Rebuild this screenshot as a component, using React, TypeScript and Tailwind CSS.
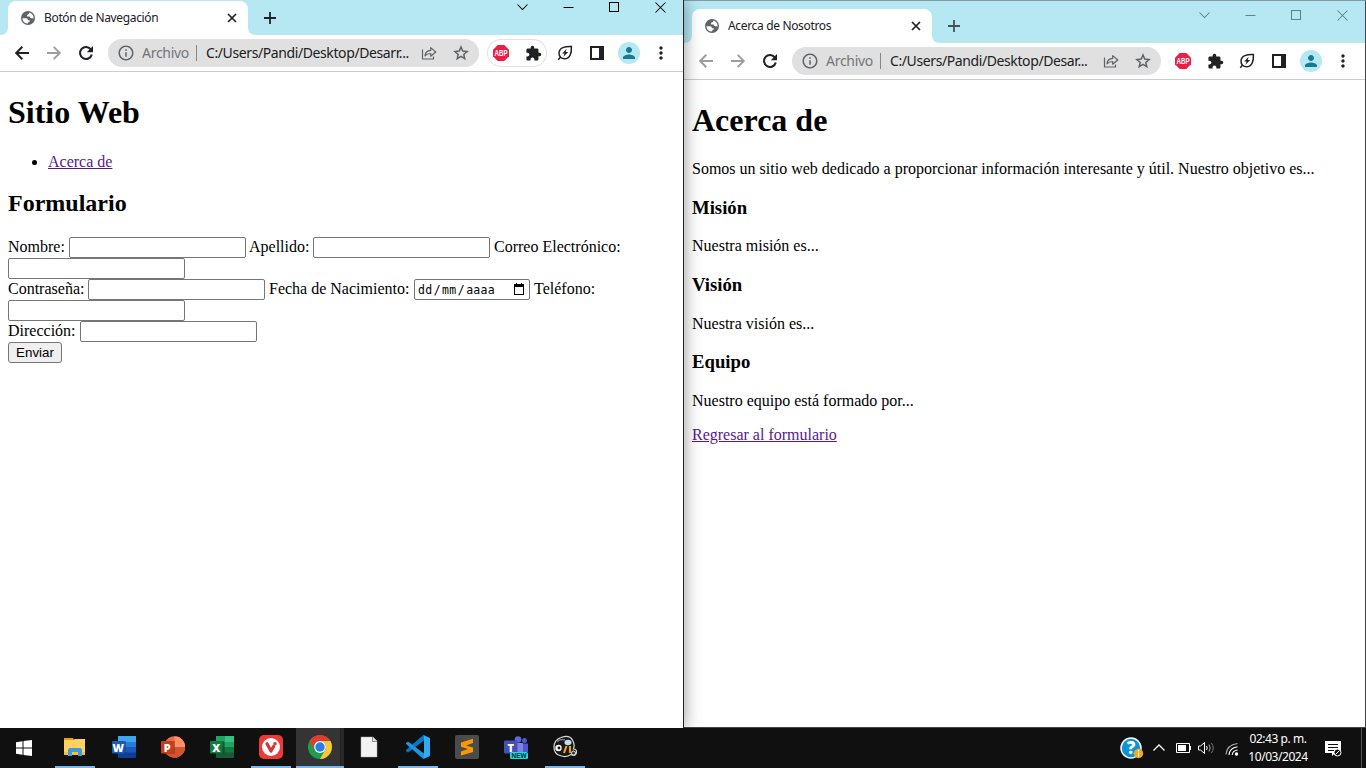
import React from "react";
import { MdInfoOutline, MdExtension, MdPerson, MdMoreVert } from "react-icons/md";

function GlobeIcon() {
  return (
    <svg width="14" height="14" viewBox="0 0 14 14" className="shrink-0">
      <circle cx="7" cy="7" r="7" fill="#5f6368" />
      <path d="M1.3 7.2 H5 Q7 7.4 7 9.2 H8.8 V10.6 Q7 10.8 7 12.6 Q2.2 12.4 1.3 7.2Z" fill="#fff" />
      <path d="M8.4 1.5 Q8.4 3.4 6.6 3.6 Q5.4 4 6.2 5.4 H8.6 Q9 7.2 10.4 7.2 Q12.2 7 12.6 7.6 Q12.8 3 8.4 1.500Z" fill="#fff" />
    </svg>
  );
}

function BackIcon() {
  return (
    <svg width="16" height="16" viewBox="0 0 16 16" fill="none" stroke="currentColor" strokeWidth="2">
      <path d="M15 8 H2.500 M8.300 1.800 L2.200 8 L8.300 14.200" />
    </svg>
  );
}

function ForwardIcon() {
  return (
    <svg width="16" height="16" viewBox="0 0 16 16" fill="none" stroke="currentColor" strokeWidth="1.900">
      <path d="M1 8 H13.500 M7.700 1.800 L13.800 8 L7.700 14.200" />
    </svg>
  );
}

function ReloadIcon() {
  return (
    <svg width="16" height="16" viewBox="0 0 16 16" fill="none" stroke="currentColor" strokeWidth="2.100">
      <path d="M13 4.600 A6 6 0 1 0 13.800 9.500" />
      <path d="M15 1 V7.200 H8.800Z" fill="currentColor" stroke="none" />
    </svg>
  );
}

function StarIcon() {
  return (
    <svg width="16" height="16" viewBox="0 0 16 16" fill="none" stroke="#5f6368" strokeWidth="1.500" className="ml-4 mr-px shrink-0">
      <path d="M8 2 L9.700 6.100 L14.100 6.500 L10.800 9.400 L11.800 13.700 L8 11.400 L4.200 13.700 L5.200 9.400 L1.900 6.500 L6.300 6.100Z" />
    </svg>
  );
}

function ShareIcon() {
  return (
    <svg width="16" height="16" viewBox="0 0 16 16" fill="none" stroke="#5f6368" strokeWidth="1.2">
      <path d="M1.5 4.5 V14 H12.5 V11.5" />
      <path d="M4 10.8 Q4.3 5.8 9.7 5.3 V2.6 L14.8 7 L9.7 11.2 V8.5 Q6 8.4 4 10.8Z" strokeLinejoin="round" />
    </svg>
  );
}

function LeafIcon() {
  return (
    <svg width="16" height="16" viewBox="0 0 16 16" fill="none" stroke="#202124" strokeWidth="1.5">
      <path d="M14.4 1.5 C8 1.2 2.2 2.6 2 8 C1.9 11.6 4.5 13.8 7.5 13.8 C12.8 13.8 14.8 8.5 14.4 1.5Z" />
      <path d="M1.2 14.8 L3.4 12.3" />
      <path d="M9.6 3.8 L5.2 8.4 H7.6 L6.5 11.7 L11.2 7.1 H8.7Z" fill="#202124" stroke="none" />
    </svg>
  );
}

function AbpIcon() {
  return (
    <svg width="16" height="16" viewBox="0 0 16 16" className="overflow-visible">
      <path d="M4.7 0 H11.3 L16 4.7 V11.3 L11.3 16 H4.7 L0 11.3 V4.7Z" fill="#ed1e45" />
      <text x="1.500" y="11" textLength="13" lengthAdjust="spacingAndGlyphs" fontSize="8.5" fontWeight="700" fontFamily="Liberation Sans, sans-serif" fill="#fff">ABP</text>
    </svg>
  );
}

function PanelIcon() {
  return (
    <svg width="14" height="14" viewBox="0 0 14 14">
      <path d="M0 0H14V14H0Z M2 2V12H9V2Z" fillRule="evenodd" fill="#202124" />
    </svg>
  );
}

function WindowControls({ active }: { active: boolean }) {
  return (
    <div className={"flex h-[14px] " + (active ? "text-black" : "text-[#648087]")}>
      {["M2.5 4.5 L7.5 9.5 L12.5 4.5", "M2.5 7.5 H12.5", "M2.5 2.5 H11.5 V11.5 H2.5Z", "M2.5 2.5 L12.5 12.5 M12.5 2.5 L2.5 12.5"].map((d) => (
        <div key={d} className="flex w-[46px] justify-center">
          <svg width="15" height="15" viewBox="0 0 15 15" className="shrink-0" fill="none" stroke="currentColor" strokeWidth="1.05"><path d={d} /></svg>
        </div>
      ))}
    </div>
  );
}

type BrowserProps = { title: string; address: string; active: boolean; children: React.ReactNode };

function BrowserChrome({ title, address, active, children }: BrowserProps) {
  const cell = "flex w-8 items-center justify-center shrink-0";
  const pillCell = "flex w-7 items-center justify-center shrink-0";
  return (
    <>
      <div className="flex h-[35px] shrink-0 justify-between bg-[#b6e8f3]">
        <div className="flex pt-px">
          <svg width="8" height="34" viewBox="0 0 8 34"><path d="M0 34 Q8 34 8 26 V34Z" fill="#fff" /></svg>
          <div className="flex h-[34px] w-[240px] items-center rounded-t-lg bg-white pl-[13px] pr-[11px]">
            <GlobeIcon />
            <span className="ml-[9px] flex-1 whitespace-nowrap text-[12px] tracking-[-0.34px] text-[#202124]">{title}</span>
            <svg width="10" height="10" viewBox="0 0 10 10"><path d="M1 1 L9 9 M9 1 L1 9" stroke="#202124" strokeWidth="1.7" /></svg>
          </div>
          <svg width="8" height="34" viewBox="0 0 8 34"><path d="M8 34 Q0 34 0 26 V34Z" fill="#fff" /></svg>
          <svg width="12" height="12" viewBox="0 0 12 12" className={"ml-2 mt-[11px] " + (active ? "text-[#202124]" : "text-[#3f5459]")}>
            <path d="M6 0 V12 M0 6 H12" stroke="currentColor" strokeWidth="1.8" />
          </svg>
        </div>
        <WindowControls active={active} />
      </div>
      <div className="flex h-[37px] shrink-0 items-center border-b border-[#cbcccd] px-[6px]">
        <div className={cell + (active ? " text-[#202124]" : " text-[#9e9e9e]")}><BackIcon /></div>
        <div className={cell + " text-[#9e9e9e]"}><ForwardIcon /></div>
        <div className={cell + " text-[#202124]"}><ReloadIcon /></div>
        <div className="ml-[6px] mr-[6px] flex h-7 min-w-0 flex-1 items-center rounded-full bg-[#e0e0e0] pl-[9px] pr-[9px]">
          <MdInfoOutline size={18} className="shrink-0 text-[#5f6368]" />
          <span className="mb-px ml-[7px] w-[54px] whitespace-nowrap text-[14px] tracking-[-0.28px] text-[#72767a]">Archivo</span>
          <span className="h-4 w-px bg-[#85888b]" />
          <span className="mb-px ml-[9px] min-w-0 flex-1 whitespace-nowrap text-[14px] tracking-[-0.4px] text-[#202124]">{address}</span>
          <ShareIcon />
          <StarIcon />
        </div>
        <div className={"mx-[2px] flex h-7 w-[60px] shrink-0 items-center gap-1 rounded-full " + (active ? "shadow-[inset_0_0_0_1px_#e1e2e4]" : "")}>
          <div className={pillCell}><AbpIcon /></div>
          <div className={pillCell + " text-[#202124]"}><MdExtension size={17} /></div>
        </div>
        <div className={cell}><LeafIcon /></div>
        <div className={cell}><PanelIcon /></div>
        <div className={cell}><div className="flex size-[22px] items-center justify-center rounded-full bg-[#b6e8f3]"><MdPerson size={18} className="text-[#167b92]" /></div></div>
        <div className={cell + " text-[#202124]"}><MdMoreVert size={20} /></div>
      </div>
      <div className="flex-1 px-2 font-['Liberation_Serif',serif] text-[16px] leading-[18px] text-black">{children}</div>
    </>
  );
}

const field = "h-[21px] w-[177px] rounded-[2px] border border-[#767676] bg-white";

function FormPage() {
  return (
    <>
      <h1 className="mt-[22px] text-[32px] font-bold leading-[37px]">Sitio Web</h1>
      <ul className="mt-[22px] list-disc pl-10"><li><a className="text-[#551a8b] underline">Acerca de</a></li></ul>
      <h2 className="mt-[19px] text-[24px] font-bold leading-[27px]">Formulario</h2>
      <form className="mt-5 whitespace-nowrap leading-[20px]">
        <div className="flex h-[21px] gap-1">
          <label className="w-[57px]">Nombre:</label><input className={field} />
          <label className="-ml-px w-[60px]">Apellido:</label><input className={field} />
          <label>Correo Electrónico:</label>
        </div>
        <div className="flex h-[21px]"><input className={field} /></div>
        <div className="flex h-[21px] gap-1">
          <label className="w-[76px]">Contraseña:</label><input className={field} />
          <label className="w-[141px]">Fecha de Nacimiento:</label>
          <div className="flex h-[21px] w-[116px] items-center justify-between rounded-[2px] border border-[#767676] pl-[3px] pr-1">
            <span className="mt-px font-['DejaVu_Sans_Mono',monospace] text-[11.5px] tracking-[0.3px]">dd<span className="mx-[1.2px]">/</span>mm<span className="mx-[1.2px]">/</span>aaaa</span>
            <svg width="12" height="13" viewBox="0 0 12 13"><path d="M1 1H3V0H4V1H8V0H9V1H11V12H1Z M2 4V11H10V4Z" fillRule="evenodd" fill="#000" /></svg>
          </div>
          <label>Teléfono:</label>
        </div>
        <div className="flex h-[21px]"><input className={field} /></div>
        <div className="flex h-[21px] gap-1"><label className="w-[68px]">Dirección:</label><input className={field} /></div>
        <button type="button" className="flex h-[21px] w-[54px] items-center justify-center rounded-[3px] border border-[#767676] bg-[#efefef] font-['Liberation_Sans',sans-serif] text-[13.333px]">Enviar</button>
      </form>
    </>
  );
}

function AboutPage() {
  const h3 = "mt-[19px] text-[18.72px] font-bold leading-[21px]";
  return (
    <>
      <h1 className="mt-[22px] text-[32px] font-bold leading-[37px]">Acerca de</h1>
      <p className="mt-[21px]">Somos un sitio web dedicado a proporcionar información interesante y útil. Nuestro objetivo es...</p>
      <h3 className={h3}>Misión</h3><p className="mt-[19px]">Nuestra misión es...</p>
      <h3 className={h3}>Visión</h3><p className="mt-[20px]">Nuestra visión es...</p>
      <h3 className="mt-[18px] text-[18.72px] font-bold leading-[21px]">Equipo</h3><p className="mt-[20px]">Nuestro equipo está formado por...</p>
      <a className="mt-4 block text-[#551a8b] underline">Regresar al formulario</a>
    </>
  );
}

function Letter({ x, children }: { x: number; children: string }) {
  return <text x={x} y="16.500" textAnchor="middle" fontSize="11" fontWeight="800" fontFamily="Open Sans, sans-serif" fill="#fff">{children}</text>;
}

const apps: { name: string; open?: boolean; current?: boolean; art: React.ReactNode }[] = [
  { name: "files", open: true, art: <>
    <path d="M1 3H10L11 5H1Z" fill="#e6a100" /><path d="M1 5H10L12 4H22V20H1Z" fill="#ffd25f" /><path d="M1 17H22V20H1Z" fill="#f7bd3c" />
    <path d="M5 21V15Q5 13 7 13H17Q19 13 19 15V21H15V17H9V21Z" fill="#3f9bdc" /></> },
  { name: "word", art: <>
    <rect x="6" y="1" width="18" height="22" rx="1" fill="#103f91" /><path d="M6 1H24V7H6Z" fill="#41a5ee" /><path d="M6 7H24V12H6Z" fill="#2b7cd3" /><path d="M6 12H24V17.500H6Z" fill="#185abd" />
    <path d="M6 6H14V19H6Z" fill="#123d80" opacity=".5" /><rect y="6" width="12.500" height="12.500" rx="1" fill="#185abd" /><Letter x={6.2}>W</Letter></> },
  { name: "powerpoint", art: <>
    <circle cx="13.500" cy="12" r="10.700" fill="#ed6c47" /><path d="M13.500 1.300A10.700 10.700 0 0 1 24.200 12H13.500Z" fill="#ff8f6b" /><path d="M2.800 12H24.200A10.700 10.700 0 0 1 2.800 12Z" fill="#d35230" />
    <path d="M6 6H14V19H6Z" fill="#8c2c16" opacity=".5" /><rect y="6" width="12.500" height="12.500" rx="1" fill="#c43e1c" /><Letter x={6.2}>P</Letter></> },
  { name: "excel", art: <>
    <rect x="6" y="1" width="18" height="22" rx="1" fill="#185c37" /><path d="M6 1H15V7H6Z" fill="#21a366" /><path d="M15 1H24V7H15Z" fill="#33c481" /><path d="M6 7H15V12H6Z" fill="#107c41" /><path d="M15 7H24V12H15Z" fill="#21a366" /><path d="M15 12H24V17.500H15Z" fill="#107c41" />
    <path d="M6 6H14V19H6Z" fill="#0b4225" opacity=".5" /><rect y="6" width="12.500" height="12.500" rx="1" fill="#107c41" /><Letter x={6.2}>X</Letter></> },
  { name: "vivaldi", open: true, art: <>
    <rect width="24" height="24" rx="5" fill="#ef3939" /><circle cx="12" cy="12" r="9" fill="#fff" />
    <path d="M8 8.800L12 16L14.600 11.500" fill="none" stroke="#d8343b" strokeWidth="3.200" strokeLinecap="round" strokeLinejoin="round" /><circle cx="16" cy="8.700" r="1.800" fill="#d8343b" /></> },
  { name: "chrome", open: true, current: true, art: <>
    <circle cx="12" cy="12" r="12" fill="#1e9e4b" />
    <path d="M1.610 6A12 12 0 0 1 22.390 6H12A6 6 0 0 0 6.800 15Z" fill="#e33b2e" />
    <path d="M12 6H22.390A12 12 0 0 1 12 24L17.200 15A6 6 0 0 0 12 6Z" fill="#fcc934" />
    <circle cx="12" cy="12" r="5.900" fill="#fff" /><circle cx="12" cy="12" r="4.700" fill="#287de6" /></> },
  { name: "document", art: <><path d="M4 2H16L20 6V22H4Z" fill="#f3f3f3" stroke="#aaa" strokeWidth=".5" /><path d="M15.500 2V6.500H20" fill="#ddd" stroke="#777" strokeWidth=".8" /></> },
  { name: "code", open: true, art: <>
    <path d="M0 16L2 17.500L18 5.500V0Q17 .1 16.500 .8L0 15Z" fill="#007acc" /><path d="M0 8L2 6.500L18 18.500V24Q17 23.900 16.500 23.200L0 9Z" fill="#1f95df" /><path d="M17.500 0L24 3V21L17.500 24Q18 23.500 18 22V2Q18 .5 17.500 0Z" fill="#2fadf1" /></> },
  { name: "sublime", art: <><rect width="24" height="24" rx="2" fill="#4b4b4b" /><path d="M6 7.500L18 3.700V8L11 10.500L18 12.600V17L6 20.600V16.500L13 14L6 11.800Z" fill="#ff9800" /></> },
  { name: "teams", art: <>
    <circle cx="14" cy="4.500" r="3.300" fill="#5f67d8" /><circle cx="20.500" cy="5.500" r="2.500" fill="#5059c9" /><path d="M16 8.500H24V17H16Z" fill="#5059c9" /><path d="M8 8H19V18H8Z" fill="#7b83eb" />
    <rect y="5.500" width="13.500" height="13" rx="1" fill="#464eb8" /><Letter x={6.8}>T</Letter><rect x="6" y="17" width="18" height="7" rx="1.500" fill="#23dce1" />
    <text x="7.500" y="23" fontSize="6.600" fontWeight="800" textLength="15" lengthAdjust="spacingAndGlyphs" fontFamily="Liberation Sans, sans-serif" fill="#082a2d">NEW</text></> },
  { name: "bee", open: true, art: <>
    <path d="M1 12Q1 5 8 2.500Q17 -1 20 6Q22 10 20.500 14Q24 14 23.500 18Q22 22 18 19.500Q13 23 7 20.500Q1 19 1 12Z" fill="#181818" stroke="#d6d6d6" strokeWidth="1.200" />
    <path d="M4 6.500Q8 3.500 12 5" stroke="#777" strokeWidth="1.600" fill="none" /><circle cx="5.500" cy="13" r="3.200" fill="#fff" /><circle cx="6" cy="13" r="1.400" fill="#111" />
    <ellipse cx="15" cy="7.500" rx="3.500" ry="2.800" fill="#bdddf5" /><path d="M13.500 11L11 18M17 11V18" stroke="#e7a11e" strokeWidth="2.200" /><circle cx="20.500" cy="18" r="2" fill="#333" stroke="#ddd" /></> },
];

function Taskbar() {
  return (
    <div className="flex h-10 shrink-0 bg-[#101010]">
      <div className="flex w-[51px] items-center pl-4">
        <svg width="16" height="16" viewBox="0 0 16 16" fill="#fff"><path d="M0 2.200L6.500 1.300V7.500H0ZM7.500 1.100L16 0V7.500H7.500ZM0 8.500H6.500V14.700L0 13.800ZM7.500 8.500H16V16L7.500 14.900Z" /></svg>
      </div>
      <div className="flex gap-px">
        {apps.map((app) => (
          <div key={app.name} className={"flex w-12 flex-col items-center " + (app.current ? "bg-linear-to-r from-[#343434] from-[44px] via-[#1c1c1c] via-[44px] to-[#292929] to-[45px]" : "")}>
            <div className="flex h-[38px] items-center">
              <svg width="24" height="24" viewBox="0 0 24 24">{app.art}</svg>
            </div>
            {app.open && <div className={"h-0.5 shrink-0 bg-[#76b9ed] " + (app.current ? "w-12" : "w-10")} />}
          </div>
        ))}
      </div>
      <div className="ml-auto flex items-center text-white">
        <svg width="24" height="24" viewBox="0 0 24 24">
          <circle cx="11" cy="12" r="10" fill="#0a93d7" stroke="#fff" strokeWidth="1.500" /><text x="11" y="18" textAnchor="middle" fontSize="17" fontWeight="800" fontFamily="Open Sans, sans-serif" fill="#fff">?</text>
          <circle cx="18.500" cy="17.500" r="4.700" fill="#f5a81c" /><path d="M18.500 14V15.500M18.500 16.500V20.500" stroke="#fff" strokeWidth="1.200" />
        </svg>
        <svg className="ml-[9px]" width="12" height="8" viewBox="0 0 12 8"><path d="M.5 6.500L6 1L11.500 6.500" fill="none" stroke="#fff" strokeWidth="1.300" /></svg>
        <svg className="ml-[11px]" width="15" height="10" viewBox="0 0 15 10"><path d="M.5 .5H13.500V9.500H.5Z" fill="none" stroke="#fff" /><path d="M2 2H10V8H2ZM14 3H15V7H14Z" fill="#fff" /></svg>
        <svg className="ml-[7px]" width="17" height="14" viewBox="0 0 17 14" fill="none" stroke="#fff"><path d="M.5 5H2.500L6.500 1.500V12.500L2.500 9H.5Z" /><path d="M8.500 5Q10 7 8.500 9" /><path d="M11 3.500Q13.500 7 11 10.500" stroke="#aaa" /><path d="M13.500 2Q17 7 13.500 12" stroke="#777" /></svg>
        <svg className="ml-[10px] mt-0.5" width="14" height="14" viewBox="0 0 14 14" fill="none" stroke="#fff" strokeWidth="1.100"><path d="M1 12.500Q1.500 3 12.500 1.500" stroke="#aaa" /><path d="M4 13Q4.500 6 12.500 4.800" /><path d="M7.200 13Q7.500 8.800 12.500 8" /><circle cx="11.500" cy="12" r="1.200" fill="#fff" /></svg>
        <div className="ml-[9px] flex w-[60px] flex-col items-center whitespace-nowrap text-[12px] leading-[18px] tracking-[-0.450px]">
          <span>02:43 p. m.</span><span>10/03/2024</span>
        </div>
        <svg className="ml-[17px]" width="17" height="17" viewBox="0 0 17 17"><path d="M0 1H16V13H10L7 16V13H0Z" fill="#fff" /><path d="M3 4.500H13M3 7.500H13M3 10.500H9" stroke="#111" /><circle cx="12.500" cy="12.500" r="3.500" fill="#111" stroke="#fff" /><path d="M10.500 14.500L14.500 10.500" stroke="#fff" /></svg>
        <div className="ml-[19px] mr-1 h-10 w-px bg-[#555]" />
      </div>
    </div>
  );
}

export default function App() {
  return (
    <div className="flex h-[768px] w-[1366px] flex-col overflow-hidden bg-white font-['Noto_Sans','Open_Sans',sans-serif]">
      <div className="flex h-[728px] overflow-hidden">
        <div className="relative z-10 flex w-[684px] shrink-0 flex-col border-r border-[#252525] bg-white shadow-[0_0_16px_rgba(0,0,0,0.42)]">
          <BrowserChrome active title="Botón de Navegación" address="C:/Users/Pandi/Desktop/Desarr...">
            <FormPage />
          </BrowserChrome>
        </div>
        <div className="flex w-[682px] flex-col border-b border-r border-t border-b-[#444] border-r-[#444] border-t-[#829ca3] bg-white">
          <div className="h-[7px] shrink-0 bg-[#b6e8f3]" />
          <BrowserChrome active={false} title="Acerca de Nosotros" address="C:/Users/Pandi/Desktop/Desar...">
            <AboutPage />
          </BrowserChrome>
        </div>
      </div>
      <Taskbar />
    </div>
  );
}
